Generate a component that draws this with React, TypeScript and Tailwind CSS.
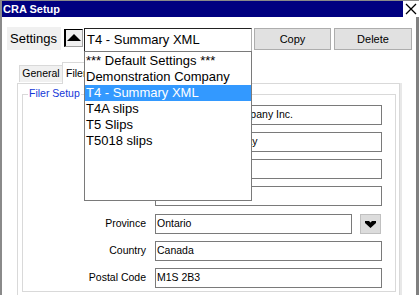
const fields = [
  { label: '', value: 'Demonstration Company Inc.' },
  { label: '', value: '1 Demonstration Way' },
  { label: '', value: '' },
  { label: 'City', value: '' },
];

const settings = [
  '*** Default Settings ***',
  'Demonstration Company',
  'T4 - Summary XML',
  'T4A slips',
  'T5 Slips',
  'T5018 slips',
];

const inputClass = 'h-[20px] border border-[#7a7a7a] bg-white pl-[1px] flex items-center text-[10.5px] text-black';

export default function App() {
  return (
    <div className="w-[419px] h-[295px] overflow-hidden bg-white border-l-2 border-t border-[#8a8a8a] flex flex-col font-['Liberation_Sans',Arial,sans-serif]">
      <div className="h-[16px] flex items-center bg-[#000080] shrink-0">
        <span className="pl-[1px] text-[11px] font-bold text-white leading-none">CRA Setup</span>
        <div className="ml-auto w-[16px] h-[16px] bg-white flex items-center justify-center">
          <svg width="12" height="12" viewBox="0 0 12 12">
            <path d="M1 1 L11 11 M11 1 L1 11" stroke="#000" strokeWidth="1.3" />
          </svg>
        </div>
      </div>

      <div className="flex-1 border-r-[3px] border-[#808080] pt-[10px]">
        <div className="flex items-start h-[23px]">
          <div className="ml-[5px] w-[54px] h-[23px] bg-[#f0f0f0] flex items-center pl-[3px] text-[13px] text-black">Settings</div>
          <div className="ml-[3px] mt-[2px] w-[19px] h-[18px] bg-[#f0f0f0] border-l-2 border-t border-black border-r border-b border-r-[#a0a0a0] border-b-[#a0a0a0] flex items-center justify-center">
            <svg width="14" height="8" viewBox="0 0 14 8">
              <polygon points="7,0 14,7 0,7" fill="#000" />
            </svg>
          </div>
          <div className="relative ml-[1px] mt-[1px] w-[168px] h-[24px] border-t border-l border-b border-[#222] border-r border-r-[#b0b0b0] bg-white flex items-center pl-[2px] text-[13px] text-black">
            T4 - Summary XML
            <div className="absolute left-[0px] top-[22px] -ml-[1px] w-[168px] h-[150px] border border-[#7a7a7a] bg-white pt-[1px] z-10">
              {settings.map((s) => (
                <div
                  key={s}
                  className={`h-[16px] pl-[1px] flex items-center text-[13px] whitespace-nowrap ${
                    s === 'T4 - Summary XML' ? 'bg-[#3399ff] text-white' : 'text-black'
                  }`}
                >
                  {s}
                </div>
              ))}
            </div>
          </div>
          <button className="ml-[2px] mt-[1px] w-[77px] h-[22px] bg-[#e1e1e1] border border-[#adadad] text-[11px] text-black">Copy</button>
          <button className="ml-[3px] mt-[1px] w-[78px] h-[22px] bg-[#e1e1e1] border border-[#adadad] text-[11px] text-black">Delete</button>
        </div>

        <div className="mt-[11px] ml-[15px] flex items-end h-[22px]">
          <div className="ml-[2px] w-[43px] h-[17px] mb-[1px] bg-[#f0f0f0] border-t border-l border-[#d9d9d9] flex items-center justify-center text-[10.5px] text-black">General</div>
          <div className="w-[40px] h-[22px] bg-white border-t border-l border-r border-[#d9d9d9] pl-[3px] flex items-center text-[10.5px] text-black relative -mb-px z-[1]">Filer</div>
        </div>

        <div className="ml-[15px] w-[383px] h-[220px] border border-[#d9d9d9] shadow-[2px_0_0_#e8e8e8] pt-[10px]">
          <div className="relative ml-[4px] w-[374px] h-[198px] border border-[#d9d9d9] pt-[10px]">
            <span className="absolute -top-[7px] left-[5px] bg-white px-[1px] text-[10.5px] leading-none text-[#1438d8]">Filer Setup</span>
            <div className="flex flex-col gap-[7px]">
              {fields.map((f, i) => (
                <div key={i} className="flex items-center">
                  <div className="w-[123px] text-right text-[10.5px] text-black">{f.label}</div>
                  <div className={`ml-[9px] w-[227px] ${inputClass}`}>{f.value}</div>
                </div>
              ))}
              <div className="flex items-center mt-[1px]">
                <div className="w-[123px] text-right text-[10.5px] text-black">Province</div>
                <div className={`ml-[9px] w-[197px] ${inputClass}`}>Ontario</div>
                <div className="ml-[8px] w-[21px] h-[20px] bg-[#dcdcdc] border border-[#c0c0c0] flex items-center justify-center">
                  <svg width="11" height="8" viewBox="0 0 11 8">
                    <polygon points="0,1 4,1 5.5,2.5 7,1 11,1 11,3 5.5,8 0,3" fill="#000" />
                  </svg>
                </div>
              </div>
              <div className="flex items-center">
                <div className="w-[123px] text-right text-[10.5px] text-black">Country</div>
                <div className={`ml-[9px] w-[227px] ${inputClass}`}>Canada</div>
              </div>
              <div className="flex items-center">
                <div className="w-[123px] text-right text-[10.5px] text-black">Postal Code</div>
                <div className={`ml-[9px] w-[227px] ${inputClass}`}>M1S 2B3</div>
              </div>
            </div>
          </div>
        </div>
      </div>
    </div>
  );
}
